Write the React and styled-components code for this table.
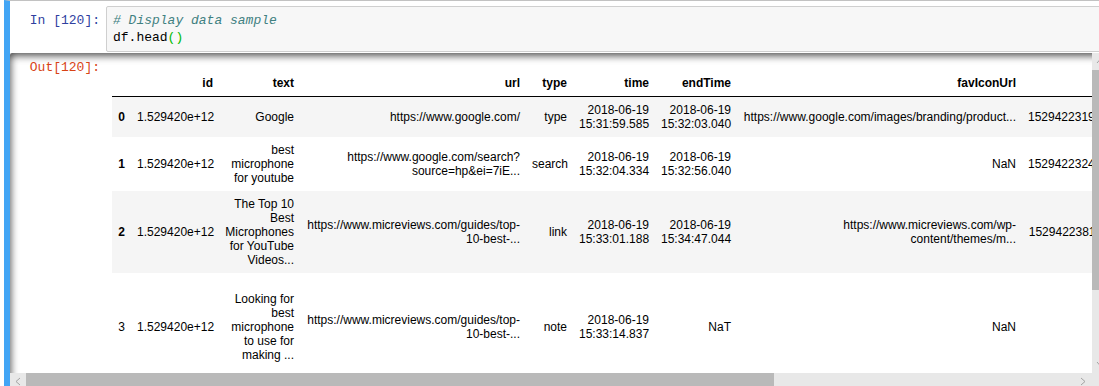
import React from 'react';
import styled, { createGlobalStyle } from 'styled-components';

const GlobalStyle = createGlobalStyle`
  html, body {
    margin: 0;
    padding: 0;
    background: #fff;
    overflow: hidden;
  }
  body {
    font-family: "Liberation Sans", Arial, sans-serif;
  }
`;

const Page = styled.div`
  width: 1099px;
  height: 386px;
  overflow: hidden;
`;

const Cell = styled.div`
  margin-left: 4px;
  width: 1099px;
  border-top: 1px solid #c2c2c2;
  border-left: 6px solid #42a5f5;
  padding-top: 5px;
`;

const InputRow = styled.div`
  display: flex;
`;

const Prompt = styled.div`
  box-sizing: border-box;
  flex: none;
  width: 96px;
  padding: 6px 6px 0 0;
  text-align: right;
  font-family: "Liberation Mono", monospace;
  font-size: 13px;
  line-height: 17px;
  color: ${p => (p.$out ? '#d84315' : '#303f9f')};
  white-space: pre;
`;

const InputArea = styled.div`
  flex: 1;
  background: #f7f7f7;
  border: 1px solid #cfcfcf;
  border-radius: 2px;
  padding: 5px 6px;
  font-family: "Liberation Mono", monospace;
  font-size: 13px;
  line-height: 17px;
  color: #000;
`;

const CodeLine = styled.div`
  white-space: pre;
`;

const Comment = styled.span`
  color: #408080;
  font-style: italic;
`;

const Bracket = styled.span`
  color: #0b0;
`;

const OutputScroll = styled.div`
  margin-top: 1px;
  height: 337px;
  display: flex;
  flex-direction: column;
  border-radius: 2px;
  box-shadow: inset 0 2px 8px rgba(0, 0, 0, 0.8);
`;

const ScrollBody = styled.div`
  display: flex;
  height: 320px;
`;

const Viewport = styled.div`
  flex: 1;
  display: flex;
  overflow: hidden;
`;

const Subarea = styled.div`
  padding: 5px 6px 6px;
`;

const Table = styled.table`
  border-collapse: collapse;
  border-spacing: 0;
  table-layout: fixed;
  width: 1010px;
  margin-top: 12px;
  font-size: 12px;
  color: #000;

  thead {
    border-bottom: 1px solid #000;
  }
`;

const Row = styled.tr`
  height: ${p => (p.$h ? `${p.$h}px` : 'auto')};
  background: ${p => (p.$odd ? '#f5f5f5' : '#fff')};
`;

const Th = styled.th`
  width: ${p => p.$w}px;
  padding: 6px;
  text-align: right;
  vertical-align: bottom;
  font-weight: bold;
  white-space: nowrap;
  line-height: normal;
`;

const IndexCell = styled.th`
  padding: 6px;
  text-align: right;
  vertical-align: middle;
  font-weight: ${p => (p.$plain ? 'normal' : 'bold')};
`;

const Td = styled.td`
  padding: 6px;
  text-align: right;
  vertical-align: middle;
  white-space: nowrap;
  line-height: normal;
`;

const VScroll = styled.div`
  flex: none;
  width: 17px;
  display: flex;
  flex-direction: column;
  background: #e8e8e8;
`;

const HScrollRow = styled.div`
  display: flex;
  height: 17px;
`;

const HScroll = styled.div`
  flex: 1;
  display: flex;
  background: #e8e8e8;
`;

const Corner = styled.div`
  flex: none;
  width: 17px;
  background: #e8e8e8;
`;

const ArrowBox = styled.div`
  flex: none;
  width: ${p => p.$w || 17}px;
  height: 17px;
  display: flex;
  align-items: center;
  justify-content: center;
  color: #a3a3a3;
`;

const Thumb = styled.div`
  flex: none;
  background: #b9b9b9;
  width: ${p => (p.$horizontal ? `${p.$len}px` : '100%')};
  height: ${p => (p.$horizontal ? '100%' : `${p.$len}px`)};
`;

const Track = styled.div`
  flex: 1;
`;

const Chevron = ({ dir }) => {
  const pts = {
    up: '1,6 4.5,2 8,6',
    down: '1,2 4.5,6 8,2',
    left: '6,1 2,4.5 6,8',
    right: '2,1 6,4.5 2,8',
  }[dir];
  return (
    <svg width="9" height="9" viewBox="0 0 9 9">
      <polyline points={pts} fill="none" stroke="currentColor" strokeWidth="1" />
    </svg>
  );
};

const columns = [
  { key: 'idx', label: '', w: 7 },
  { key: 'id', label: 'id', w: 76 },
  { key: 'text', label: 'text', w: 69 },
  { key: 'url', label: 'url', w: 214 },
  { key: 'type', label: 'type', w: 35 },
  { key: 'time', label: 'time', w: 70 },
  { key: 'end', label: 'endTime', w: 70 },
  { key: 'fav', label: 'favIconUrl', w: 273 },
  { key: 'ms', label: 'startMs', w: 110 },
];

const rows = [
  {
    idx: '0',
    id: '1.529420e+12',
    text: ['Google'],
    url: ['https://www.google.com/'],
    type: ['type'],
    time: ['2018-06-19', '15:31:59.585'],
    end: ['2018-06-19', '15:32:03.040'],
    fav: ['https://www.google.com/images/branding/product...'],
    ms: ['1529422319585.564'],
  },
  {
    idx: '1',
    id: '1.529420e+12',
    text: ['best', 'microphone', 'for youtube'],
    url: ['https://www.google.com/search?', 'source=hp&ei=7iE...'],
    type: ['search'],
    time: ['2018-06-19', '15:32:04.334'],
    end: ['2018-06-19', '15:32:56.040'],
    fav: ['NaN'],
    ms: ['1529422324334.221'],
  },
  {
    idx: '2',
    id: '1.529420e+12',
    text: ['The Top 10', 'Best', 'Microphones', 'for YouTube', 'Videos...'],
    url: ['https://www.micreviews.com/guides/top-', '10-best-...'],
    type: ['link'],
    time: ['2018-06-19', '15:33:01.188'],
    end: ['2018-06-19', '15:34:47.044'],
    fav: ['https://www.micreviews.com/wp-', 'content/themes/m...'],
    ms: ['1529422381188.372'],
  },
  {
    idx: '3',
    plain: true,
    h: 108,
    id: '1.529420e+12',
    text: ['Looking for', 'best', 'microphone', 'to use for', 'making ...'],
    url: ['https://www.micreviews.com/guides/top-', '10-best-...'],
    type: ['note'],
    time: ['2018-06-19', '15:33:14.837'],
    end: ['NaT'],
    fav: ['NaN'],
    ms: ['NaN'],
  },
];

const Lines = ({ lines }) =>
  lines.map((line, i) => (
    <React.Fragment key={i}>
      {i > 0 && <br />}
      {line}
    </React.Fragment>
  ));

const DataFrame = () => (
  <Table>
    <thead>
      <tr>
        {columns.map(c => (
          <Th key={c.key} $w={c.w}>
            {c.label}
          </Th>
        ))}
      </tr>
    </thead>
    <tbody>
      {rows.map((r, i) => (
        <Row key={r.idx} $odd={i % 2 === 0} $h={r.h}>
          <IndexCell $plain={r.plain}>{r.idx}</IndexCell>
          <Td>{r.id}</Td>
          {['text', 'url', 'type', 'time', 'end', 'fav', 'ms'].map(k => (
            <Td key={k}>
              <Lines lines={r[k]} />
            </Td>
          ))}
        </Row>
      ))}
    </tbody>
  </Table>
);

const App = () => (
  <Page>
    <GlobalStyle />
    <Cell>
      <InputRow>
        <Prompt>In [120]:</Prompt>
        <InputArea>
          <CodeLine>
            <Comment># Display data sample</Comment>
          </CodeLine>
          <CodeLine>
            df.head<Bracket>()</Bracket>
          </CodeLine>
        </InputArea>
      </InputRow>
      <OutputScroll>
        <ScrollBody>
          <Viewport>
            <Prompt $out>Out[120]:</Prompt>
            <Subarea>
              <DataFrame />
            </Subarea>
          </Viewport>
          <VScroll>
            <ArrowBox>
              <Chevron dir="up" />
            </ArrowBox>
            <Thumb $len={220} />
            <Track />
            <ArrowBox>
              <Chevron dir="down" />
            </ArrowBox>
          </VScroll>
        </ScrollBody>
        <HScrollRow>
          <HScroll>
            <ArrowBox $w={16}>
              <Chevron dir="left" />
            </ArrowBox>
            <Thumb $horizontal $len={748} />
            <Track />
            <ArrowBox>
              <Chevron dir="right" />
            </ArrowBox>
          </HScroll>
          <Corner />
        </HScrollRow>
      </OutputScroll>
    </Cell>
  </Page>
);

export default App;
